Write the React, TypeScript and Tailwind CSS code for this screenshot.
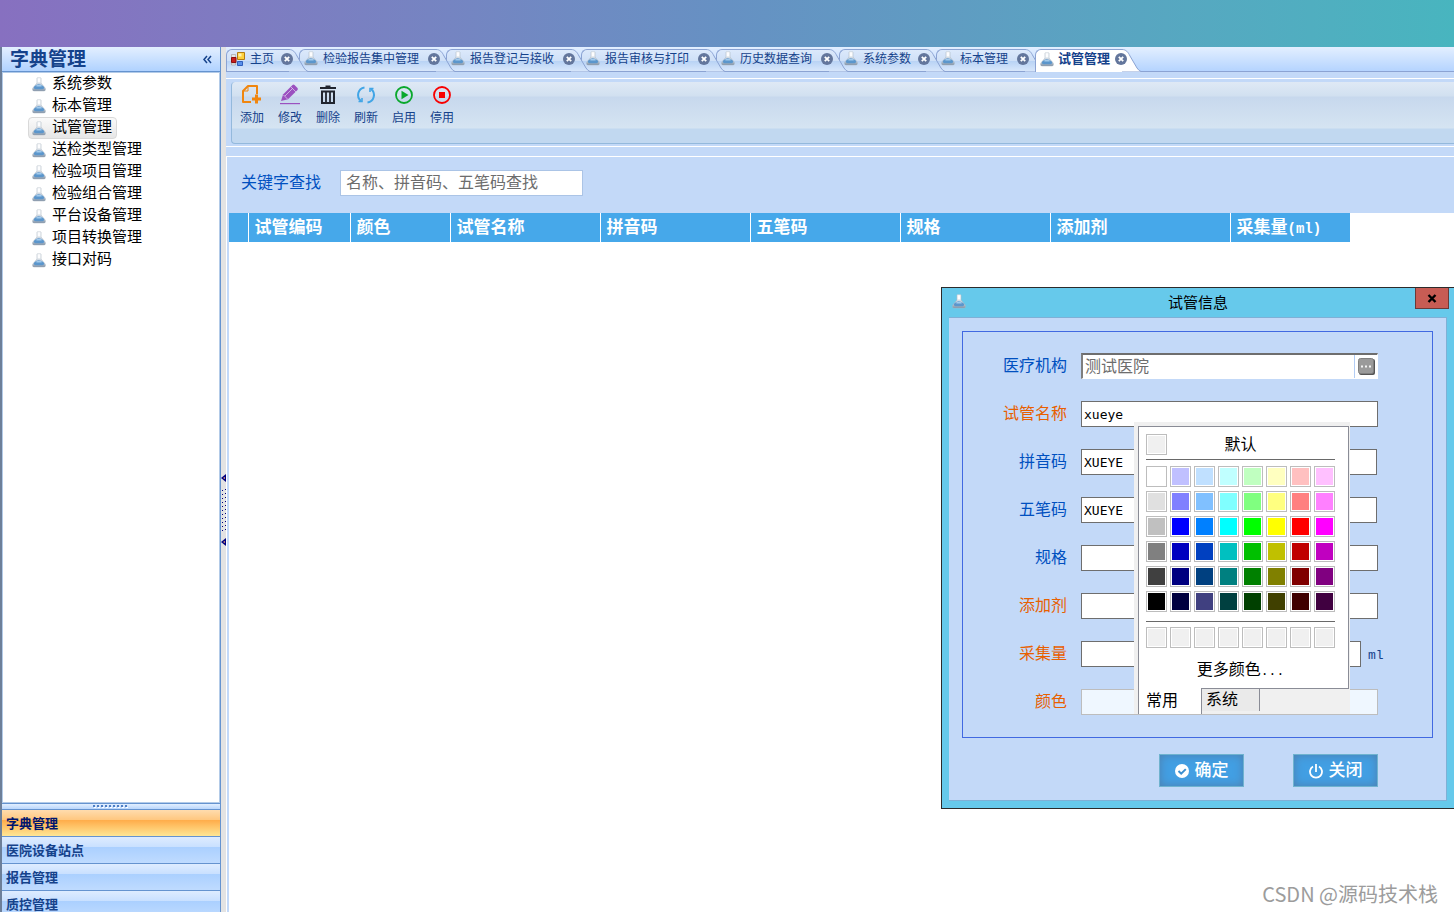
import { useState } from 'react';

const treeItems = ['系统参数', '标本管理', '试管管理', '送检类型管理', '检验项目管理', '检验组合管理', '平台设备管理', '项目转换管理', '接口对码'];

const navItems = ['字典管理', '医院设备站点', '报告管理', '质控管理'];

const tabs = [
  { title: '主页', width: 'w-[73px]' },
  { title: '检验报告集中管理', width: 'w-[147px]' },
  { title: '报告登记与接收', width: 'w-[135px]' },
  { title: '报告审核与打印', width: 'w-[135px]' },
  { title: '历史数据查询', width: 'w-[123px]' },
  { title: '系统参数', width: 'w-[97px]' },
  { title: '标本管理', width: 'w-[99px]' },
  { title: '试管管理', width: 'w-[97px]' },
];

const columns = [
  { title: '', width: 'w-[19px]' },
  { title: '试管编码', width: 'w-[102px]' },
  { title: '颜色', width: 'w-[100px]' },
  { title: '试管名称', width: 'w-[150px]' },
  { title: '拼音码', width: 'w-[150px]' },
  { title: '五笔码', width: 'w-[150px]' },
  { title: '规格', width: 'w-[150px]' },
  { title: '添加剂', width: 'w-[180px]' },
  { title: '采集量', unit: '(ml)', width: 'w-[120px]' },
];

const fields = [
  { id: 'name', label: '试管名称', value: 'xueye', required: true, style: 'w-[297px] border-[#6e6e6e] bg-white' },
  { id: 'pinyin', label: '拼音码', value: 'XUEYE', required: false, style: 'w-[296px] border-[#6e6e6e] bg-white' },
  { id: 'wubi', label: '五笔码', value: 'XUEYE', required: false, style: 'w-[296px] border-[#6e6e6e] bg-white' },
  { id: 'spec', label: '规格', value: '', required: false, style: 'w-[297px] border-[#6e6e6e] bg-white' },
  { id: 'additive', label: '添加剂', value: '', required: true, style: 'w-[297px] border-[#6e6e6e] bg-white' },
  { id: 'volume', label: '采集量', value: '', required: true, unit: 'ml', style: 'w-[280px] border-[#6e6e6e] bg-white' },
  { id: 'color', label: '颜色', value: '', required: true, style: 'w-[297px] border-[#bdbdbd] bg-[#eff7ff]' },
];

const palette = [
  ['#ffffff', '#c0c0ff', '#c0e0ff', '#c0ffff', '#c0ffc0', '#ffffc0', '#ffc0c0', '#ffc0ff'],
  ['#e0e0e0', '#8080ff', '#80c0ff', '#80ffff', '#80ff80', '#ffff80', '#ff8080', '#ff80ff'],
  ['#c0c0c0', '#0000ff', '#0080ff', '#00ffff', '#00ff00', '#ffff00', '#ff0000', '#ff00ff'],
  ['#808080', '#0000c0', '#0040c0', '#00c0c0', '#00c000', '#c0c000', '#c00000', '#c000c0'],
  ['#404040', '#000080', '#004080', '#008080', '#008000', '#808000', '#800000', '#800080'],
  ['#000000', '#000040', '#404080', '#004040', '#004000', '#404000', '#400000', '#400040'],
];

const customColors = Array(8).fill('#f0f0f0');

function FlaskIcon() {
  return (
    <svg width="14" height="15" viewBox="0 0 14 15" className="shrink-0">
      <defs>
        <linearGradient id="flask-base" x1="0" y1="0" x2="0" y2="1">
          <stop offset="0" stopColor="#eef2f6" />
          <stop offset=".7" stopColor="#c3ceda" />
          <stop offset="1" stopColor="#7d8fa3" />
        </linearGradient>
      </defs>
      <path d="M5 1h4v5l4.300 5.200q.6 2.800-1.300 2.800H2q-1.900 0-1.300-2.800L5 6z" fill="url(#flask-base)" stroke="#a9b5c1" strokeWidth=".5" />
      <path d="M5.300 .8h3.400v5H5.300z" fill="#fdfdfe" stroke="#ccd4db" strokeWidth=".5" />
      <path d="M1.800 10Q4.300 7 7 7.300T12.200 10q.4 2-1.700 2.200h-7Q1.400 12 1.800 10z" fill="#5b96cc" />
      <path d="M3.400 8.900Q7 6.500 10.600 8.900 7 10 3.400 8.900z" fill="#a4cbec" />
    </svg>
  );
}

function HomeIcon() {
  return (
    <svg width="14" height="14" viewBox="0 0 14 14" className="shrink-0">
      <path d="M.5 2.500h4v3h-4zM.5 11h4v2h-4z" fill="#e8e8e8" stroke="#a8a8a8" strokeWidth=".7" />
      <path d="M.5 5.500h4.500v5H.500z" fill="#c81e1e" stroke="#8c1010" />
      <path d="M6.500.5h7v7h-7z" fill="#ffd23c" stroke="#b57d10" />
      <path d="M7.500 1.500h3v3h-3z" fill="#fff3b0" />
      <path d="M6.500 9.500h5v4h-5z" fill="#5a91ea" stroke="#2f5fbd" />
    </svg>
  );
}

function CloseIcon() {
  return (
    <svg width="12" height="12" viewBox="0 0 12 12">
      <circle cx="6" cy="6" r="6" fill="#63769c" />
      <path d="M3.800 3.800l4.400 4.400M8.200 3.800L3.800 8.200" stroke="#fff" strokeWidth="1.800" />
    </svg>
  );
}

const tools = [
  {
    title: '添加',
    icon: (
      <g fill="none" stroke="#f0860f" strokeWidth="2">
        <path d="M10 18H2V7l5-5h9v8" strokeLinejoin="round" />
        <path d="M2 7h5V2" strokeWidth="1" />
        <path d="M15.500 10.500v9M11 15h9" strokeWidth="3" />
      </g>
    ),
  },
  {
    title: '修改',
    icon: (
      <g fill="#9b51c0">
        <path d="M2 17l2-6.500L13.500 1q1-.8 2 0l3 3q.8 1 0 2L9 15.200z" />
        <path d="M1 19h20v1.200H1z" />
        <path d="M12 3l5 5M4.500 11l4 4M6 12l8-8" stroke="#d9c8ea" strokeWidth=".8" fill="none" />
      </g>
    ),
  },
  {
    title: '删除',
    icon: (
      <g fill="none" stroke="#20242e">
        <path d="M3 4h16M8.500 2.500h5" strokeWidth="2.200" />
        <path d="M5 7.500h12V19H5z" strokeWidth="2" />
        <path d="M9 8v10M13 8v10" strokeWidth="1.800" />
      </g>
    ),
  },
  {
    title: '刷新',
    icon: (
      <g fill="none" stroke="#41a5e6" strokeWidth="2">
        <path d="M9.500 3.500A7.600 7.600 0 0 0 6 17M12.500 18.500A7.600 7.600 0 0 0 16 5" />
        <path d="M3.500 17.500H7V14M18.500 4.500H15V8" strokeWidth="1.600" />
      </g>
    ),
  },
  {
    title: '启用',
    icon: (
      <g>
        <circle cx="11" cy="11" r="8" fill="none" stroke="#0aa82c" strokeWidth="1.800" />
        <path d="M8.500 6.800l7 4.200-7 4.200z" fill="#0aa82c" />
      </g>
    ),
  },
  {
    title: '停用',
    icon: (
      <g>
        <circle cx="11" cy="11" r="8" fill="none" stroke="#f80000" strokeWidth="1.800" />
        <path d="M8 8h6v6H8z" fill="#f80000" />
      </g>
    ),
  },
];

function Sidebar({ current, onSelect }: { current: string; onSelect: (name: string) => void }) {
  return (
    <aside className="flex w-[221px] shrink-0 flex-col border-r border-l-2 border-l-[#6d7f99] border-r-[#6593cf] bg-white">
      <div className="flex h-[25px] shrink-0 items-center justify-between border-b border-[#6593cf] bg-linear-to-b from-[#e3efff] to-[#b0d2ff] pt-px pr-2 pl-2">
        <h1 className="text-[19px] leading-6 font-bold text-[#15428b]">字典管理</h1>
        <button aria-label="收起" className="text-[#15428b]">
          <svg width="9" height="9" viewBox="0 0 9 9" fill="none" stroke="currentColor" strokeWidth="1.500">
            <path d="M4 1L1 4.500 4 8M8 1L5 4.500 8 8" />
          </svg>
        </button>
      </div>
      <ul className="min-h-0 flex-1 overflow-hidden border border-[#b3cbe8] pl-[25px]">
        {treeItems.map((item) => (
          <li key={item} className="flex h-[22px]">
            <button
              onClick={() => onSelect(item)}
              className={
                item === current
                  ? 'flex items-center gap-[6px] rounded-sm border border-[#d9d9d9] bg-linear-to-b from-[#fafafa] to-[#e6e6e6] pr-1 pl-[3px] text-[15px] leading-5 text-black'
                  : 'flex items-center gap-[6px] border border-transparent pr-1 pl-[3px] text-[15px] leading-5 text-black'
              }
            >
              <FlaskIcon />
              <span className="pb-[2px]">{item}</span>
            </button>
          </li>
        ))}
      </ul>
      <div className="flex h-[7px] shrink-0 items-center justify-center border-y border-[#6593cf] bg-linear-to-b from-[#e3efff] to-[#b9d6fc]">
        <svg width="36" height="3" viewBox="0 0 36 3">
          <path d="M0 1h36" stroke="#4f7fc4" strokeWidth="2" strokeDasharray="2 2" />
          <path d="M1 2.500h36" stroke="#fff" strokeDasharray="2 2" />
        </svg>
      </div>
      <nav className="h-[102px] shrink-0 overflow-hidden">
        {navItems.map((item, i) => (
          <button
            key={item}
            className={
              i === 0
                ? 'block h-[27px] w-full border-b border-[#6593cf] bg-[linear-gradient(#ffdcae_0%,#ffc77f_38%,#ffad4b_40%,#ffe694_100%)] px-1 pt-px text-left text-[13px] font-bold text-[#00156e]'
                : 'block h-[27px] w-full border-b border-[#6593cf] bg-[linear-gradient(#deecff_0%,#c9e0ff_38%,#abd0ff_40%,#bfdbff_100%)] px-1 pt-px text-left text-[13px] font-bold text-[#15428b]'
            }
          >
            {item}
          </button>
        ))}
      </nav>
    </aside>
  );
}

function TabStrip() {
  const active = tabs.length - 1;
  return (
    <div className="flex h-[25px] shrink-0 items-end border-b border-[#8ba3d3] bg-linear-to-b from-[#e3efff] to-[#b5d4ff]">
      {tabs.map((tab, i) => (
        <div
          key={tab.title}
          className={
            i === active
              ? `relative -mb-px flex h-[23px] shrink-0 items-center pr-[5px] pb-[3px] pl-[5px] ${tab.width}`
              : `relative flex h-[22px] shrink-0 items-center pr-[6px] pb-[3px] pl-[5px] ${tab.width}`
          }
          style={{ zIndex: i === active ? 20 : tabs.length - i }}
        >
          <div
            className={
              i === active
                ? 'absolute inset-y-0 right-[10px] left-0 rounded-tl-md border-t border-l border-[#8ba3d3] bg-white'
                : 'absolute inset-y-0 right-[10px] left-0 rounded-tl-md border-t border-l border-[#8ba3d3] bg-[linear-gradient(#dce9fb_0%,#cfe0f7_50%,#b9d3f5_54%,#d8e7fb_100%)]'
            }
          />
          <svg className="absolute top-0 -right-[10px]" width="20" height="23" viewBox="0 0 20 23">
            <defs>
              <linearGradient id="tab-fill" x1="0" y1="0" x2="0" y2="1">
                <stop offset="0" stopColor="#dce9fb" />
                <stop offset=".5" stopColor="#cfe0f7" />
                <stop offset=".54" stopColor="#b9d3f5" />
                <stop offset="1" stopColor="#d8e7fb" />
              </linearGradient>
            </defs>
            <path d="M0 .5C4 .5 6 3 8 7l7 12q2 3 4 3.500H0z" fill={i === active ? '#fff' : 'url(#tab-fill)'} />
            <path d="M0 .5C4 .5 6 3 8 7l7 12q2 3 4 3.500" fill="none" stroke="#8ba3d3" />
          </svg>
          <div className="relative flex flex-1 items-center justify-between">
            <button
              className={
                i === active
                  ? 'flex items-center gap-1 text-[13px] leading-4 font-bold whitespace-nowrap text-[#15428b]'
                  : 'flex items-center gap-[5px] text-xs whitespace-nowrap text-[#15428b]'
              }
            >
              {i === 0 ? <HomeIcon /> : <FlaskIcon />}
              {tab.title}
            </button>
            <button aria-label={`关闭${tab.title}`}>
              <CloseIcon />
            </button>
          </div>
        </div>
      ))}
    </div>
  );
}

function Toolbar() {
  return (
    <div className="shrink-0 bg-[#c3d9f8] pt-[6px] pb-[9px]">
      <div className="border-y border-white pt-[3px] pb-[2px] pl-[5px]">
        <div className="h-[62px] rounded-l-sm border-b border-l border-[#94b9dc] bg-[linear-gradient(#dfe9f5_0px,#d1e0f0_14px,#c7d8ed_15px,#d5e4f2_46px,#c1d8f0_47px)] pl-px">
          <div className="flex">
            {tools.map((tool) => (
              <button key={tool.title} className="flex w-[38px] flex-col items-center pt-[2px] text-xs leading-6 text-[#15428b]">
                <svg width="22" height="22" viewBox="0 0 22 22">{tool.icon}</svg>
                {tool.title}
              </button>
            ))}
          </div>
        </div>
      </div>
    </div>
  );
}

function Swatch({ color }: { color: string }) {
  return (
    <button
      aria-label={color}
      className="block h-[21px] w-[21px] border border-[#bdbdbd] bg-white p-px"
    >
      <span className="block h-full w-full" style={{ backgroundColor: color }} />
    </button>
  );
}

function ColorPicker() {
  return (
    <div className="absolute top-[134px] left-[192px] w-[216px] bg-[#f0f0f0] pt-1 pr-px pl-1 text-base text-black">
      <div className="border border-[#8a8c96] bg-white pt-[7px] pr-[13px] pb-1 pl-[7px]">
        <div className="flex items-center border-b border-[#696969] pb-1">
          <Swatch color="#f0f0f0" />
          <button className="mr-[21px] flex-1 leading-[21px]">默认</button>
        </div>
        <div className="grid grid-cols-8 gap-x-[3px] gap-y-1 border-b border-[#696969] pt-[6px] pb-[9px]">
          {palette.flat().map((color) => (
            <Swatch key={color} color={color} />
          ))}
        </div>
        <div className="grid grid-cols-8 gap-x-[3px] pt-[5px]">
          {customColors.map((color, i) => (
            <Swatch key={i} color={color} />
          ))}
        </div>
        <button className="mt-[10px] block w-full text-center leading-6">
          更多颜色<span className="font-[Liberation_Mono] text-[13px]">...</span>
        </button>
      </div>
      <div className="flex items-start">
        <button className="relative -mt-px h-[26px] w-16 border-r border-l border-[#8a8c96] bg-white pl-[7px] text-left leading-6">常用</button>
        <button className="h-[22px] w-[58px] border-r border-[#8a8c96] bg-[#eaeaea] pl-1 text-left leading-[18px]">系统</button>
      </div>
    </div>
  );
}

function TubeDialog({ onClose }: { onClose: () => void }) {
  return (
    <div
      role="dialog"
      aria-label="试管信息"
      className="absolute top-[287px] right-0 w-[513px] border-t border-b border-l border-[#2b2b2b] bg-[#66c9eb] pr-[7px] pb-[7px] pl-[7px]"
    >
      <div className="flex h-[29px] items-start">
        <div className="w-8 pt-[6px] pl-[3px]">
          <FlaskIcon />
        </div>
        <h2 className="flex-1 text-center text-[15px] leading-[29px] text-black">试管信息</h2>
        <button
          aria-label="关闭"
          onClick={onClose}
          className="-mr-[2px] flex h-[21px] w-[34px] items-center justify-center border border-t-0 border-[#6b3a38] bg-[#c75c54]"
        >
          <svg width="10" height="9" viewBox="0 0 10 9" stroke="#000" strokeWidth="2.400">
            <path d="M1.500 1l7 7M8.500 1l-7 7" />
          </svg>
        </button>
      </div>
      <div className="border-y border-r border-[#7fb0d6] bg-[#c3d9f8] px-[13px] pt-[13px] pb-[13px]">
        <div className="flex flex-col gap-[22px] border border-[#4169e1] pt-[21px] pb-[22px]">
          <div className="flex items-center gap-[14px]">
            <label htmlFor="org" className="w-[104px] shrink-0 text-right text-base leading-6 text-[#0050c0]">医疗机构</label>
            <div className="flex h-[26px] w-[297px] border-t-2 border-r border-b border-l-2 border-t-[#6e6e6e] border-r-white border-b-white border-l-[#7f7f7f] bg-white">
              <input id="org" readOnly defaultValue="测试医院" className="min-w-0 flex-1 px-[2px] text-base leading-5 text-[#6d6d6d]" />
              <button aria-label="选择医疗机构" className="flex w-[23px] items-center justify-center border-l border-[#b3cdf5]">
                <svg width="17" height="17" viewBox="0 0 17 17">
                  <rect x="1" y="1" width="16" height="16" rx="2" fill="#555" />
                  <rect x=".5" y=".5" width="15" height="15" rx="2" fill="#9a9a9a" stroke="#808080" />
                  <path d="M3 7.500h2v2H3zM7 7.500h2v2H7zM11 7.500h2v2h-2z" fill="#f4f4f4" />
                </svg>
              </button>
            </div>
          </div>
          {fields.map((field) => (
            <div key={field.id} className="flex items-center">
              <label
                htmlFor={field.id}
                className={
                  field.required
                    ? 'mr-[14px] w-[104px] shrink-0 text-right text-base leading-6 text-[#e86000]'
                    : 'mr-[14px] w-[104px] shrink-0 text-right text-base leading-6 text-[#0050c0]'
                }
              >
                {field.label}
              </label>
              <input
                id={field.id}
                defaultValue={field.value}
                className={`h-[26px] border px-[2px] font-[DejaVu_Sans_Mono] text-[13px] text-black ${field.style}`}
              />
              {field.unit && <span className="ml-[7px] pt-1 font-[Liberation_Mono] text-[13px] text-[#15428b]">{field.unit}</span>}
            </div>
          ))}
        </div>
        <div className="flex justify-end gap-[49px] pt-4 pr-[55px]">
          <button className="flex h-[33px] w-[85px] items-center justify-center gap-[6px] border border-[#6fb3cf] bg-[#429fe3] pt-px text-[17px] font-medium text-white shadow-[inset_0_0_10px_#4f7fae]">
            <svg width="14" height="14" viewBox="0 0 14 14">
              <circle cx="7" cy="7" r="7" fill="#fff" />
              <path d="M3.500 7l2.700 2.700 4.600-4.600" fill="none" stroke="#3b8fd0" strokeWidth="2" />
            </svg>
            确定
          </button>
          <button
            onClick={onClose}
            className="flex h-[33px] w-[85px] items-center justify-center gap-[6px] border border-[#6fb3cf] bg-[#429fe3] pt-px text-[17px] font-medium text-white shadow-[inset_0_0_10px_#4f7fae]"
          >
            <svg width="14" height="15" viewBox="0 0 14 15" fill="none" stroke="#fff" strokeWidth="1.800">
              <path d="M7 0v8M4 2.500a6 6 0 1 0 6 0" />
            </svg>
            关闭
          </button>
        </div>
      </div>
      <ColorPicker />
    </div>
  );
}

export default function App() {
  const [current, setCurrent] = useState('试管管理');
  const [open, setOpen] = useState(true);

  return (
    <div className="relative flex h-screen flex-col overflow-hidden bg-white font-['Liberation_Sans','Noto_Sans_CJK_SC',sans-serif]">
      <header className="h-[47px] shrink-0 bg-linear-to-r from-[#8770c0] via-[#6691c3] to-[#48b5bf]" />
      <div className="flex min-h-0 flex-1">
        <Sidebar current={current} onSelect={setCurrent} />
        <div className="flex w-[5px] shrink-0 items-center justify-center bg-[#e3e3e3] pt-[60px]">
          <svg width="5" height="72" viewBox="0 0 5 72">
            <path d="M5 0v8L0 4zM5 64v8L0 68z" fill="#000080" />
            <path d="M4 3v2L2 4zM4 67v2L2 68z" fill="#f0a070" />
            <path d="M1.500 16v41M4.500 15v41" stroke="#000080" strokeDasharray="1 3" />
          </svg>
        </div>
        <main className="flex min-w-0 flex-1 flex-col">
          <TabStrip />
          <Toolbar />
          <div className="flex min-h-0 flex-1 border-t border-l border-white">
            <div className="flex min-w-0 flex-1 flex-col border-l-2 border-[#c3d9f8]">
              <div className="flex h-[56px] shrink-0 items-center gap-[19px] bg-[#c3d9f8] pb-1 pl-3">
                <label htmlFor="keyword" className="text-base text-[#0050c0]">关键字查找</label>
                <input
                  id="keyword"
                  placeholder="名称、拼音码、五笔码查找"
                  className="h-[26px] w-[243px] border border-[#abc4e6] bg-white px-[5px] text-base text-[#6d6d6d] placeholder:text-[#6d6d6d]"
                />
              </div>
              <table className="w-[1121px] table-fixed border-collapse">
                <thead>
                  <tr className="h-[29px] bg-[#46a8ea]">
                    {columns.map((col) => (
                      <th
                        key={col.title}
                        className={`border-r border-white p-0 pt-px pl-[6px] text-left text-[17px] leading-6 font-bold text-white ${col.width}`}
                      >
                        {col.title}
                        {col.unit && <span className="font-[Liberation_Mono] text-sm">{col.unit}</span>}
                      </th>
                    ))}
                  </tr>
                </thead>
                <tbody />
              </table>
            </div>
          </div>
        </main>
      </div>
      {open && <TubeDialog onClose={() => setOpen(false)} />}
      <div className="absolute right-4 bottom-1 font-['Noto_Sans_CJK_SC',sans-serif] text-xl leading-7 text-[#9c9c9c]">CSDN @源码技术栈</div>
    </div>
  );
}
